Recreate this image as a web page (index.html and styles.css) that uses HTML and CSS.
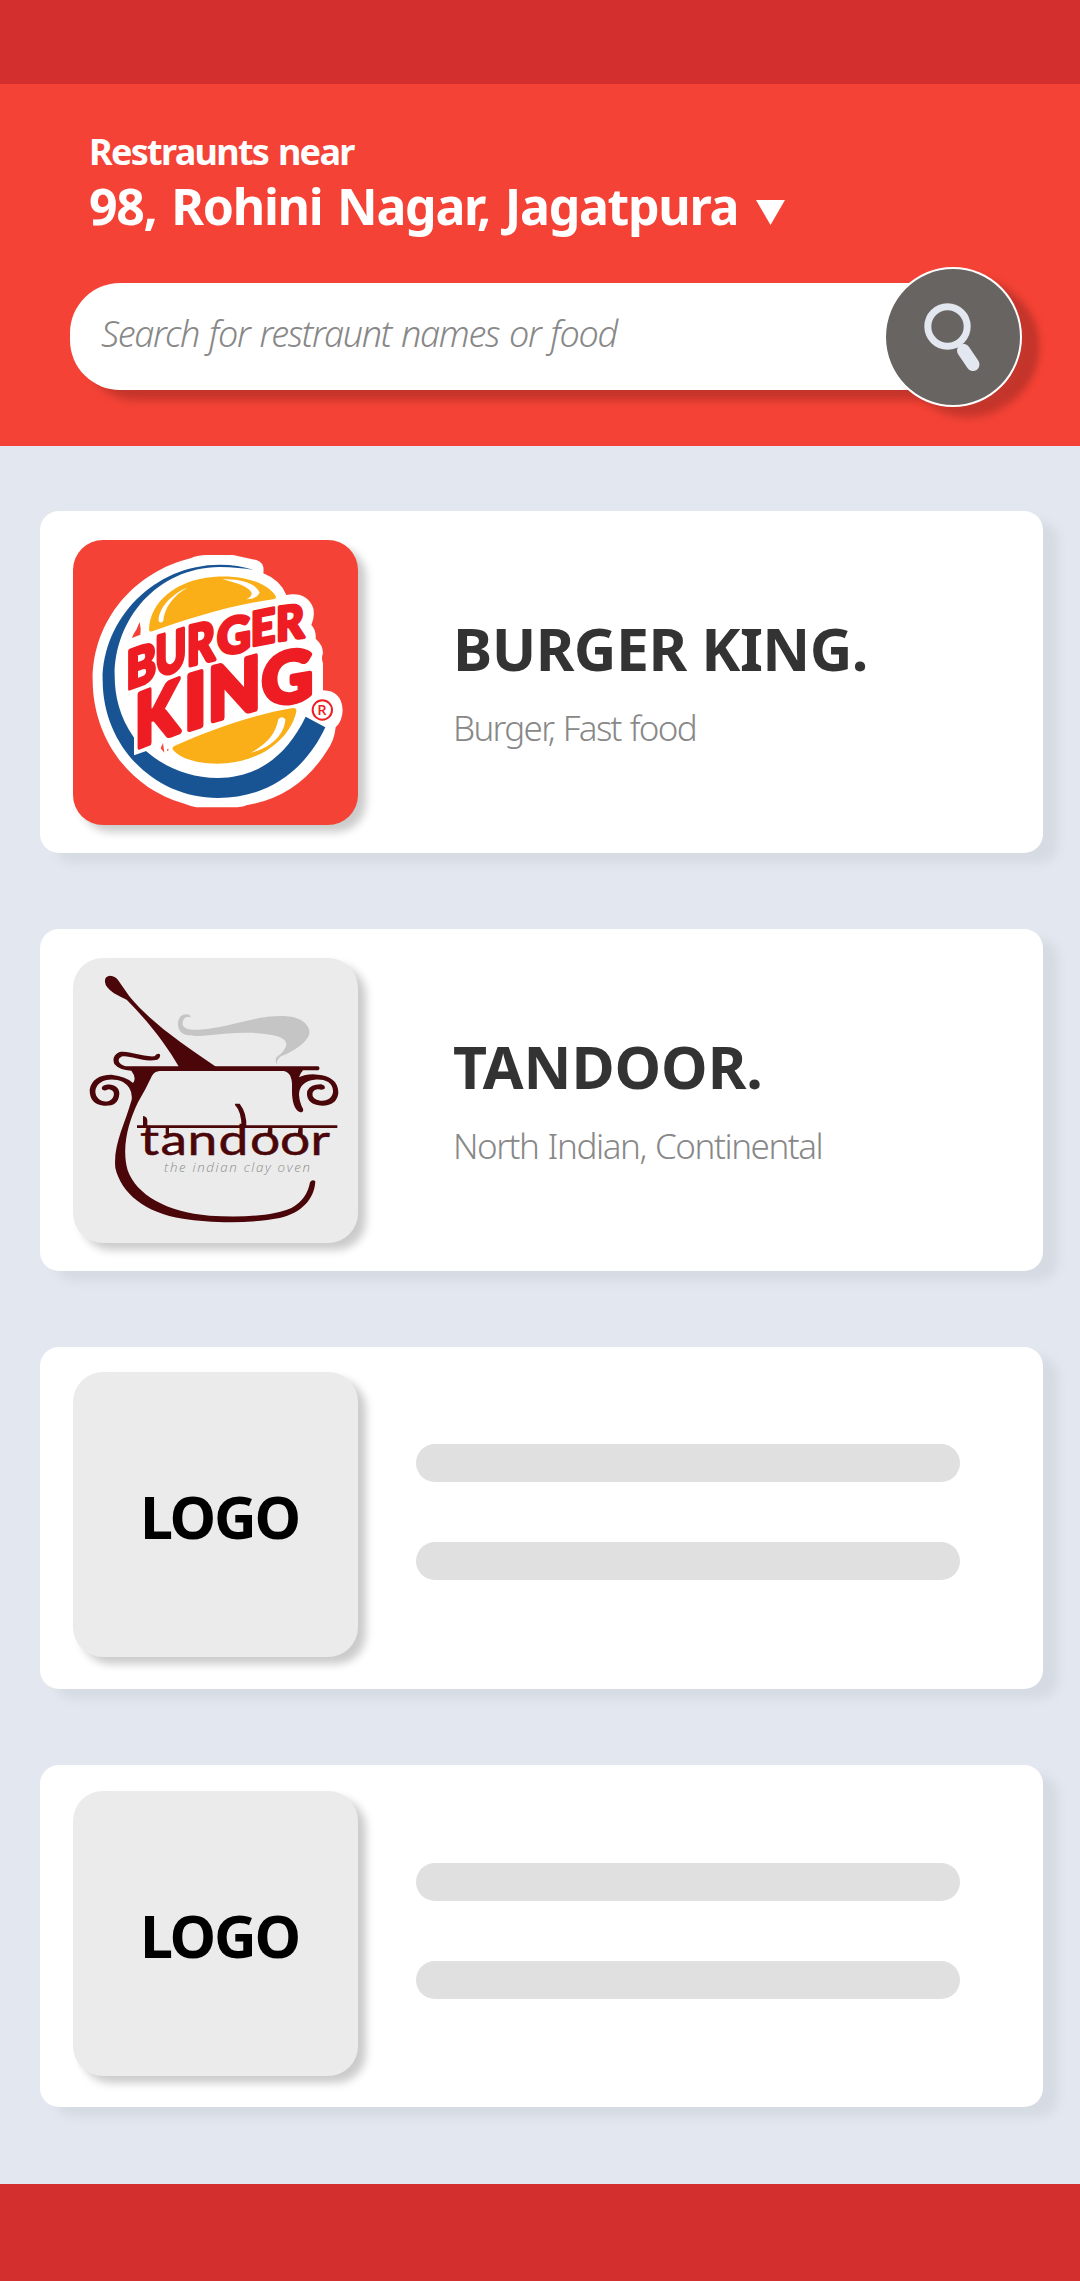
FILE: index.html
```html
<!DOCTYPE html>
<html lang="en">
<head>
<meta charset="utf-8">
<title>Restraunts</title>
<link rel="stylesheet" href="styles.css">
</head>
<body>
<div class="statusbar"></div>
<header class="header">
  <div class="near">Restraunts near</div>
  <div class="address"><span>98, Rohini Nagar, Jagatpura</span><svg class="caret" viewBox="0 0 29 25"><path d="M0 0H29L14.500 25Z" fill="#fff"/></svg></div>
  <div class="search">
    <span class="placeholder">Search for restraunt names or food</span>
    <button class="search-btn" aria-label="Search">
      <svg viewBox="0 0 134 136"><ellipse cx="61.500" cy="57.500" rx="19.700" ry="19.700" fill="none" stroke="#e3e7ef" stroke-width="7"/><path d="M77.500 81.500L87 95.500" stroke="#e3e7ef" stroke-width="13" stroke-linecap="round"/></svg>
    </button>
  </div>
</header>
<main class="list">
  <article class="card">
    <div class="logo logo-red">
      <svg viewBox="40 30 855 855">
        <path fill="#fff" d="M475 75H520Q560 84 590 90Q616 98 611 130Q662 150 680 195Q742 184 761 235Q766 262 755 285Q770 300 768 326Q790 345 790 370Q784 384 790 400V481Q846 482 849 540Q848 574 828 592Q824 634 800 665Q715 800 560 826Q548 832 520 832H410Q390 828 370 820C205 772 99 620 99 450C99 270 225 125 395 84Q410 76 440 75Z"/>
        <path fill="#185494" d="M582 120Q535 104 480 104C285 104 129 265 129 450C129 650 285 804 475 804C620 804 735 725 797 592L738 560C680 680 590 744 475 744C385 744 310 708 258 662L222 622C180 560 165 500 165 435C165 270 290 113 480 111Q540 112 582 120Z"/>
        <path fill="#f44336" d="M240 276Q245 298 242 314L217 324Q220 312 230 299ZM303 655L310 639L314 668ZM322 656L328 659L323 664Z"/>
        <g fill="#faaf18">
          <path d="M268 300C270 215 350 150 460 141C560 132 630 165 649 200Q650 207 641 208C510 226 390 265 278 304Q268 306 268 300Z"/>
          <path d="M344 648C455 598 575 555 700 534Q711 533 710 545C690 630 600 692 500 700C430 705 365 690 340 660Q336 652 344 648Z"/>
        </g>
        <g fill="#fff">
          <path d="M384 173C340 188 294 235 297 274Q304 282 311 272C314 235 340 195 384 173Z"/>
          <path d="M488 148C540 145 590 160 600 188Q592 207 560 208Q580 197 575 187C560 164 520 157 488 148Z"/>
          <path d="M574 668C625 640 648 610 656 568Q667 555 677 568C676 610 635 655 574 668Z"/>
        </g>
        <path fill="#fff" d="M223 676V485L290 460V640L262 662Z"/>
        <g class="bk">
          <text transform="translate(200 480) skewY(-20) scale(1.350 1.580)">B</text>
          <text transform="translate(287 442) skewY(-17) scale(1.250 1.660)">U</text>
          <text transform="translate(381 409) skewY(-13) scale(1.300 1.640)">R</text>
          <text transform="translate(472 379) skewY(-11) scale(1.400 1.480)">G</text>
          <text transform="translate(573 349) skewY(-11) scale(1.280 1.400)">E</text>
          <text transform="translate(649 334) skewY(-8) scale(1.300 1.400)">R</text>
          <text transform="translate(226 656) skewY(-21) scale(1.900 2.200)">K</text>
          <text transform="translate(374 603) skewY(-17) scale(2.200 2.240)">I</text>
          <text transform="translate(445 576) skewY(-15) scale(2.040 2.200)">N</text>
          <text transform="translate(606 530) skewY(-9) scale(2.120 2.100)">G</text>
        </g>
        <circle cx="788" cy="540" r="29" fill="none" stroke="#ee1c23" stroke-width="6"/>
        <text class="reg" x="773" y="556">R</text>
      </svg>
    </div>
    <div class="info">
      <h2 class="name">BURGER KING.</h2>
      <p class="cuisine">Burger, Fast food</p>
    </div>
  </article>
  <article class="card">
    <div class="logo">
      <svg viewBox="40 40 855 855">
        <path fill="#c5c5c5" d="M392 218Q395 209 377 209C354 211 351 240 359 256C368 274 400 275 430 273C500 267 570 258 636 271Q680 279 680 300Q676 320 650 338Q646 348 651 360Q650 346 664 335C700 320 742 295 749 267C753 240 720 216 680 215C610 210 550 234 480 247C430 256 375 262 369 240Q367 218 385 216Z"/>
        <g fill="#4a0608">
          <path d="M136 112Q134 94 152 93Q166 94 175 106L209 155C270 230 370 300 470 367H358C320 300 265 230 201 165Q182 157 163 146Q137 128 136 112Z"/>
          <path d="M186 365H776Q783 371 776 377H730Q722 385 718 398Q742 386 775 390C810 392 837 410 836 445Q832 482 788 483C750 482 738 460 743 438Q754 418 785 419Q800 424 794 433Q785 437 778 434C762 433 755 445 760 456C770 472 815 476 820 442C822 410 790 402 765 405C735 408 718 425 718 450Q720 475 730 492Q733 502 722 503C702 495 696 465 697 430Q699 383 672 379H300Q285 380 277 393Q260 430 235 473C205 535 185 610 204 677C230 750 320 803 450 813C540 819 640 815 695 790Q742 765 751 713Q758 702 767 710C764 765 725 805 660 820C570 838 450 835 370 822C255 805 185 745 167 670C160 600 195 540 216 465Q220 430 190 412C150 395 109 410 107 440C107 475 155 480 162 453Q166 436 146 434Q137 440 128 435Q122 424 140 420C162 416 180 428 179 448C176 478 160 484 133 483C100 480 90 460 90 435C95 405 120 390 155 390Q200 395 220 415Q232 400 215 378Q180 377 164 358Q155 335 178 323C205 316 245 338 285 335Q290 325 300 328Q305 338 293 345C250 355 210 330 185 336Q172 342 180 355Q190 365 205 366Z"/>
          <path d="M232 542H833V550H232Z"/>
          <path d="M526 477H540Q562 505 560 548H546Q545 500 526 481Z"/>
          <path d="M250 514Q264 516 263 530V548H250ZM318 548H328V568H318ZM626 548H638V570L622 573ZM717 548H729V570L713 573Z"/>
        </g>
        <ellipse cx="343" cy="608" rx="24" ry="13" fill="#fff"/>
        <text class="wordmark" transform="scale(1.250 1)" y="631" x="193 242 307 381 457 529 602">tandoor</text>
        <text class="tagline" x="313" y="681" textLength="438">the indian clay oven</text>
      </svg>
    </div>
    <div class="info">
      <h2 class="name name-tandoor">TANDOOR.</h2>
      <p class="cuisine cuisine-wide">North Indian, Continental</p>
    </div>
  </article>
  <article class="card card-empty">
    <div class="logo"><span>LOGO</span></div>
    <div class="bars"><i></i><i></i></div>
  </article>
  <article class="card card-empty card-last">
    <div class="logo"><span>LOGO</span></div>
    <div class="bars"><i></i><i></i></div>
  </article>
</main>
<footer class="footer"></footer>
</body>
</html>
```
FILE: styles.css
```css
* { box-sizing: border-box; }
body {
  margin: 0;
  width: 1080px;
  background: #e3e7ef;
  font-family: "Noto Sans", "Open Sans", sans-serif;
}
.statusbar { height: 84px; background: #d32f2f; }
.header {
  height: 362px;
  padding: 46px 58px 0 70px;
  background: #f44336;
  color: #fff;
  font-weight: 700;
}
.near { padding-left: 19px; font-size: 36px; line-height: 44px; letter-spacing: -1.7px; word-spacing: 2px; white-space: nowrap; }
.address {
  display: flex;
  align-items: center;
  padding-left: 19px;
  font-size: 50px;
  line-height: 64px;
  letter-spacing: -1.3px;
  word-spacing: 3px;
  white-space: nowrap;
}
.caret { width: 29px; height: 25px; margin: 12px 0 0 18px; }
.search {
  display: flex;
  align-items: center;
  justify-content: space-between;
  height: 107px;
  margin-top: 45px;
  padding-left: 31px;
  border-radius: 50px;
  background: #fff;
  box-shadow: 15px 10px 8px #c4352b;
}
.placeholder {
  font-size: 36px;
  font-style: italic;
  font-weight: 300;
  line-height: 44px;
  letter-spacing: -1.3px;
  word-spacing: 1.8px;
  margin-bottom: 6px;
  color: #888;
  white-space: nowrap;
}
.search-btn {
  flex: none;
  width: 138px;
  height: 140px;
  padding: 0;
  border: 2px solid #fff;
  border-radius: 50%;
  background: #686462;
  box-shadow: 15px 10px 8px #c4352b;
}
.search-btn svg { display: block; width: 134px; height: 136px; }
.list {
  display: flex;
  flex-direction: column;
  gap: 76px;
  height: 1738px;
  padding: 65px 37px 0 40px;
}
.card {
  display: flex;
  height: 342px;
  padding: 29px 33px 0;
  border-radius: 19px;
  background: #fff;
  box-shadow: 15px 10px 10px #d6dbe3;
}
.card-empty { padding-top: 25px; }
.card-last { padding-top: 26px; }
.logo {
  flex: none;
  display: flex;
  align-items: center;
  justify-content: center;
  width: 285px;
  height: 285px;
  border-radius: 30px;
  background: #ebebeb;
  box-shadow: 8px 7px 8px #cbcbcb;
  font-size: 59px;
  font-weight: 700;
  line-height: 80px;
  color: #000;
}
.logo span { margin: 2px 0 0 8px; letter-spacing: -2.2px; }
.logo-red { background: #f44336; }
.logo svg { display: block; width: 285px; height: 285px; }
.bk text {
  font-family: Lato, sans-serif;
  font-size: 100px;
  font-weight: 900;
  fill: #ee1c23;
  stroke: #ee1c23;
  stroke-width: 7;
  stroke-linejoin: round;
}
.reg { font-family: "Open Sans", sans-serif; font-size: 44px; font-weight: 600; fill: #ee1c23; }
.wordmark { font-family: Lato, sans-serif; font-size: 128px; font-weight: 400; fill: #4a0608; stroke: #4a0608; stroke-width: 1.5; }
.tagline { font-family: "Open Sans", sans-serif; font-size: 40px; font-style: italic; font-weight: 300; fill: #8d8d8d; }
.info { padding: 68px 0 0 95px; }
.name { margin: 0; font-size: 59px; font-weight: 700; line-height: 80px; letter-spacing: -0.58px; color: #333; white-space: nowrap; }
.name-tandoor { letter-spacing: -0.1px; }
.cuisine { margin: 16px 0 0; font-size: 35px; font-weight: 300; line-height: 48px; letter-spacing: -1.7px; word-spacing: 1.5px; color: #888; white-space: nowrap; }
.cuisine-wide { letter-spacing: -1.45px; }
.bars { display: flex; flex-direction: column; gap: 60px; padding: 72px 0 0 58px; }
.bars i { display: block; width: 544px; height: 38px; border-radius: 19px; background: #e0e0e0; }
.footer { height: 97px; background: #d32f2f; }
```
